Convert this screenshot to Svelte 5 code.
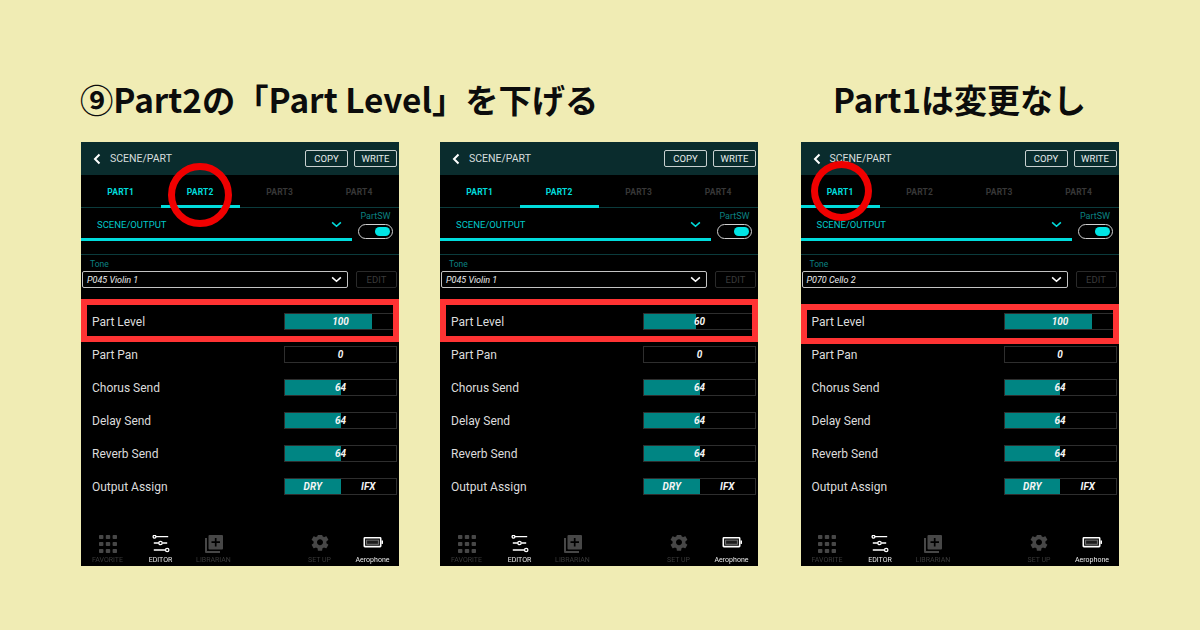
<script lang="ts">
    interface Panel {
        id: string;
        active: number;
        tone: string;
        level: number;
    }

    const panels: Panel[] = [
        { id: "a", active: 2, tone: "P045 Violin 1", level: 100 },
        { id: "b", active: 2, tone: "P045 Violin 1", level: 60 },
        { id: "c", active: 1, tone: "P070 Cello 2", level: 100 },
    ];

    const tabs = [1, 2, 3, 4];

    // level bars run 0-127, pan is centered and has no fill
    function fill(value: number): number {
        return (value / 127) * 100;
    }
</script>

<main class="page">
    <h1 class="title first">⑨Part2の「Part Level」を下げる</h1>
    <h1 class="title last">Part1は変更なし</h1>

    {#each panels as panel}
        <section class="phone">
            <header class="top">
                <svg class="back" viewBox="0 0 8 12" width="8" height="12">
                    <path d="M6.5 1.5 2 6l4.5 4.5" fill="none" stroke="#fff" stroke-width="2" />
                </svg>
                <span class="top-title">SCENE/PART</span>
                <button class="btn">COPY</button>
                <button class="btn">WRITE</button>
            </header>

            <nav class="tabs">
                {#each tabs as n}
                    <div class="tab" class:on={panel.active === n}>PART{n}</div>
                {/each}
            </nav>

            <div class="section">
                <div class="section-main">
                    <span class="section-name">SCENE/OUTPUT</span>
                    <svg class="section-chev" viewBox="0 0 12 8" width="11" height="7">
                        <path d="M1 1.5 6 6l5-4.5" fill="none" stroke="#00dcdc" stroke-width="1.8" />
                    </svg>
                </div>
                <div class="part-sw">
                    <span>PartSW</span>
                    <div class="toggle"><i></i></div>
                </div>
            </div>

            <div class="tone">
                <span class="tone-label">Tone</span>
                <div class="tone-row">
                    <div class="select">
                        <span>{panel.tone}</span>
                        <svg viewBox="0 0 12 8" width="11" height="7">
                            <path d="M1 1.5 6 6l5-4.5" fill="none" stroke="#fff" stroke-width="1.8" />
                        </svg>
                    </div>
                    <div class="edit">EDIT</div>
                </div>
            </div>

            <div class="rows">
                <div class="row">
                    <span>Part Level</span>
                    <div class="bar">
                        <div class="bar-fill" style="width: {fill(panel.level)}%"></div>
                        <b>{panel.level}</b>
                    </div>
                </div>
                <div class="row">
                    <span>Part Pan</span>
                    <div class="bar"><b>0</b></div>
                </div>
                {#each ["Chorus Send", "Delay Send", "Reverb Send"] as name}
                    <div class="row">
                        <span>{name}</span>
                        <div class="bar">
                            <div class="bar-fill" style="width: {fill(64)}%"></div>
                            <b>64</b>
                        </div>
                    </div>
                {/each}
                <div class="row">
                    <span>Output Assign</span>
                    <div class="bar split">
                        <b class="picked">DRY</b>
                        <b>IFX</b>
                    </div>
                </div>
            </div>

            <footer class="nav">
                <div class="nav-item">
                    <svg viewBox="0 0 18 18" width="18" height="18" fill="#474747">
                        <rect x="0" y="0" width="4.4" height="4" rx=".8" />
                        <rect x="6.8" y="0" width="4.4" height="4" rx=".8" />
                        <rect x="13.6" y="0" width="4.4" height="4" rx=".8" />
                        <rect x="0" y="7" width="4.4" height="4" rx=".8" />
                        <rect x="6.8" y="7" width="4.4" height="4" rx=".8" />
                        <rect x="13.6" y="7" width="4.4" height="4" rx=".8" />
                        <rect x="0" y="14" width="4.4" height="4" rx=".8" />
                        <rect x="6.8" y="14" width="4.4" height="4" rx=".8" />
                        <rect x="13.6" y="14" width="4.4" height="4" rx=".8" />
                    </svg>
                    <span>FAVORITE</span>
                </div>
                <div class="nav-item lit">
                    <svg viewBox="0 0 18 18" width="18" height="18" fill="none" stroke="#fff" stroke-width="1.3">
                        <path d="M4 1.700h12.200M1.800 8h4.900M10.300 8h4.900M1.800 15h11.600" />
                        <circle cx="2.500" cy="1.700" r="1.400" />
                        <circle cx="8.500" cy="8" r="1.700" />
                        <circle cx="15.200" cy="15" r="1.700" />
                    </svg>
                    <span>EDITOR</span>
                </div>
                <div class="nav-item">
                    <svg viewBox="0 0 18 18" width="18" height="18">
                        <path d="M0 3h2v13h13v2H1a1 1 0 0 1-1-1z" fill="#474747" />
                        <rect x="3.500" y="0" width="14.500" height="14.500" rx="1" fill="#474747" />
                        <path d="M10.700 3v8.500M6.500 7.200H15" stroke="#000" stroke-width="1.700" />
                    </svg>
                    <span>LIBRARIAN</span>
                </div>
                <div class="nav-item"></div>
                <div class="nav-item">
                    <svg viewBox="1.500 3.500 21 21" width="18" height="18">
                        <path fill="#474747" d="M19.430 12.980c.04-.32.07-.64.07-.98s-.03-.66-.07-.98l2.110-1.650c.19-.15.24-.42.12-.64l-2-3.460c-.12-.22-.39-.3-.61-.22l-2.490 1c-.52-.4-1.080-.73-1.690-.98l-.38-2.650C14.460 2.180 14.250 2 14 2h-4c-.25 0-.46.18-.49.42l-.38 2.650c-.61.25-1.170.59-1.690.98l-2.490-1c-.23-.09-.49 0-.61.22l-2 3.460c-.13.22-.07.49.12.64l2.110 1.650c-.04.32-.07.65-.07.98s.03.66.07.98l-2.110 1.650c-.19.15-.24.42-.12.64l2 3.460c.12.22.39.3.61.22l2.490-1c.52.4 1.080.73 1.690.98l.38 2.650c.03.24.24.42.49.42h4c.25 0 .46-.18.49-.42l.38-2.650c.61-.25 1.170-.59 1.690-.98l2.490 1c.23.09.49 0 .61-.22l2-3.460c.12-.22.07-.49-.12-.64l-2.110-1.650zM12 15.500c-1.930 0-3.500-1.570-3.500-3.500s1.570-3.500 3.500-3.500 3.500 1.570 3.500 3.500-1.570 3.500-3.500 3.500z" />
                    </svg>
                    <span>SET UP</span>
                </div>
                <div class="nav-item lit">
                    <svg viewBox="0 0 20 18" width="20" height="18">
                        <rect x="1.300" y="2.800" width="16.400" height="8.800" rx=".6" fill="none" stroke="#fff" stroke-width="1.600" />
                        <rect x="3.600" y="5.100" width="11.800" height="4.200" fill="#1c1c1c" stroke="#777" stroke-width="1" />
                        <rect x="18.500" y="5.500" width="1.500" height="3.400" fill="#fff" />
                    </svg>
                    <span>Aerophone</span>
                </div>
            </footer>

            <div class="level-mark mark-{panel.id}"></div>
            {#if panel.id !== "b"}
                <div class="ring ring-{panel.id}"></div>
            {/if}
        </section>
    {/each}
</main>

<style>
    :global(body) {
        background: #f0ecb4;
    }

    .page {
        width: 1200px;
        height: 630px;
        box-sizing: border-box;
        padding: 78px 0 0 81px;
        display: grid;
        grid-template-columns: 318px 319.500px 318px;
        grid-template-rows: 42px 424px;
        column-gap: 41px;
        row-gap: 22px;
        font-family: Roboto, sans-serif;
        overflow: hidden;
    }

    .title {
        margin: 0;
        font-family: "Noto Sans CJK JP", sans-serif;
        font-size: 33px;
        line-height: 42px;
        font-weight: 700;
        color: #0c0c0c;
        white-space: nowrap;
    }

    .first {
        grid-column: 1 / 3;
        margin-left: -1px;
        font-size: 33.300px;
    }

    .last {
        grid-column: 3;
        text-align: center;
    }

    .phone {
        position: relative;
        width: 318px;
        background: #000;
        display: flex;
        flex-direction: column;
        color: #e6e6e6;
    }

    .top {
        height: 33px;
        flex-shrink: 0;
        background: #0a2c2d;
        display: flex;
        align-items: center;
        padding: 0 2px 0 12px;
        gap: 6px;
    }

    .top-title {
        flex: 1;
        font-size: 10.500px;
        margin-left: 3px;
        color: #d8dede;
    }

    .btn {
        width: 43px;
        height: 17px;
        padding: 0;
        background: none;
        border: 1px solid #c8d0d0;
        border-radius: 2px;
        color: #e8eeee;
        font: 9.500px Roboto, sans-serif;
    }

    .tabs {
        height: 33px;
        flex-shrink: 0;
        display: grid;
        grid-template-columns: repeat(4, 1fr);
        border-bottom: 1px solid #0b3b3c;
        box-sizing: border-box;
    }

    .tab {
        display: flex;
        align-items: center;
        justify-content: center;
        padding-top: 3px;
        font-size: 8.500px;
        font-weight: 700;
        letter-spacing: 0.2px;
        color: #383838;
        border-bottom: 3px solid transparent;
        margin-bottom: -1px;
    }

    .tab:first-child {
        color: #00dcdc;
    }

    .tab.on {
        color: #00dcdc;
        border-bottom-color: #00dcdc;
    }

    .section {
        height: 47px;
        flex-shrink: 0;
        box-sizing: border-box;
        display: flex;
        border-bottom: 1px solid #0b3b3c;
    }

    .section-main {
        width: 271px;
        height: 33px;
        box-sizing: border-box;
        border-bottom: 3.500px solid #00dcdc;
        display: flex;
        align-items: center;
        justify-content: space-between;
        padding: 3px 10px 0 16px;
    }

    .section-name {
        font-size: 9.500px;
        color: #00c8c8;
    }

    .part-sw {
        flex: 1;
        display: flex;
        flex-direction: column;
        align-items: center;
        padding-top: 3px;
        font-size: 9px;
        color: #0b8080;
    }

    .toggle {
        margin-top: 3px;
        width: 35px;
        height: 15px;
        box-sizing: border-box;
        border: 1px solid #d0d0d0;
        border-radius: 8px;
        display: flex;
        justify-content: flex-end;
        align-items: center;
        padding-right: 2px;
    }

    .toggle i {
        width: 15px;
        height: 9px;
        border-radius: 5px;
        background: #00e5e5;
    }

    .tone {
        height: 50px;
        flex-shrink: 0;
        display: flex;
        flex-direction: column;
        padding: 3px 2px 0 1px;
        box-sizing: border-box;
    }

    .tone-label {
        font-size: 8.500px;
        line-height: 12px;
        margin-left: 8px;
        color: #0b8080;
    }

    .tone-row {
        display: flex;
        margin-top: 1px;
        height: 17px;
        gap: 8px;
    }

    .select {
        flex: 1;
        display: flex;
        align-items: center;
        justify-content: space-between;
        padding: 0 5px 0 4px;
        border: 1px solid #c4c4c4;
        border-radius: 2px;
        font-size: 9px;
        font-style: italic;
        color: #eee;
    }

    .edit {
        width: 41px;
        box-sizing: border-box;
        display: flex;
        align-items: center;
        justify-content: center;
        border: 1px solid #2a2a2a;
        border-radius: 2px;
        font-size: 9.500px;
        color: #3a3a3a;
    }

    .rows {
        display: flex;
        flex-direction: column;
    }

    .row {
        height: 33px;
        display: flex;
        align-items: center;
        justify-content: space-between;
        padding: 0 2px 0 11px;
        font-size: 12px;
        color: #dcdcdc;
    }

    .bar {
        position: relative;
        width: 113px;
        height: 17px;
        box-sizing: border-box;
        border: 1px solid #2e2e2e;
        display: flex;
        align-items: center;
        justify-content: center;
    }

    .bar b {
        position: relative;
        font-size: 10px;
        font-style: italic;
        font-weight: 700;
        color: #f4f4f4;
    }

    .bar-fill {
        position: absolute;
        left: 0;
        top: 0;
        bottom: 0;
        background: #008583;
    }

    .split b {
        flex: 1;
        align-self: stretch;
        display: flex;
        align-items: center;
        justify-content: center;
    }

    .split .picked {
        background: #008583;
    }

    .nav {
        margin-top: auto;
        height: 31px;
        display: grid;
        grid-template-columns: repeat(6, 1fr);
    }

    .nav-item {
        display: flex;
        flex-direction: column;
        align-items: center;
        justify-content: flex-start;
        gap: 3px;
        font-size: 7px;
        line-height: 8px;
        color: #3a3a3a;
        will-change: opacity;
    }

    .nav-item.lit {
        color: #e8e8e8;
    }

    .level-mark {
        position: absolute;
        left: 0;
        right: 0;
        box-sizing: border-box;
        border: 6px solid #ff3333;
        top: 157px;
        height: 42.500px;
    }

    .mark-c {
        top: 162px;
        height: 40px;
    }

    .ring {
        position: absolute;
        box-sizing: border-box;
        border: 7px solid #f00000;
        border-radius: 50%;
    }

    .ring-a {
        left: 87px;
        top: 21px;
        width: 64px;
        height: 64px;
    }

    .ring-c {
        left: 10.500px;
        top: 19px;
        width: 61px;
        height: 60px;
    }
</style>
